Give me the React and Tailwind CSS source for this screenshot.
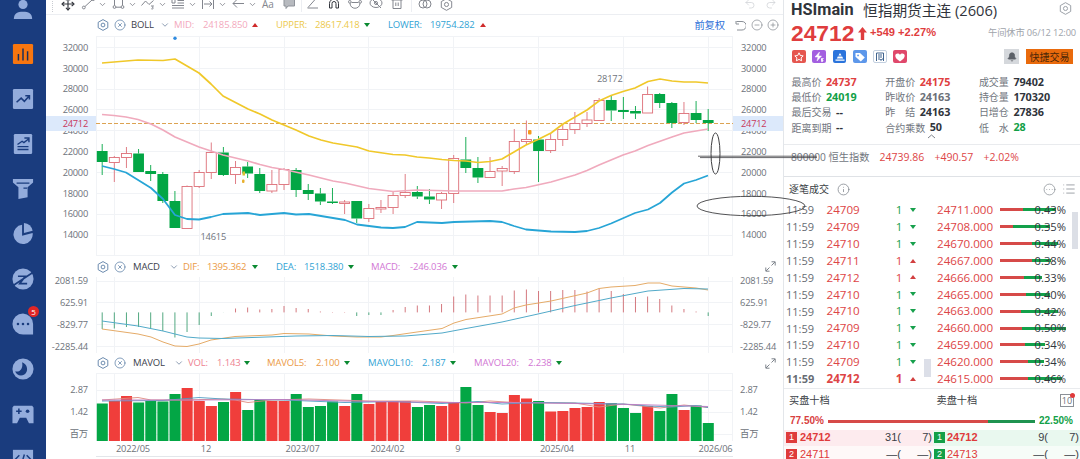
import {
  Move, ChevronDown, CirclePlus, CircleMinus, CircleX, Info, CircleEllipsis, List, Bell, Undo2, Redo2,
} from 'lucide-react';

const STEP = 12.12;
const X0 = 102.2;
const xAt = (i) => X0 + i * STEP;
const GREEN = '#03a645';
const RED = '#f03e3b';

// [up, bodyTop, bodyBottom, high, low]
const candles = [
  [0, 151, 162, 144, 175], [1, 157.5, 162.5, 156, 182], [1, 153.5, 157.5, 147, 168], [0, 153.5, 172, 149, 172],
  [0, 171, 174, 165, 181], [0, 174, 201, 172, 203], [0, 201, 228, 191, 228], [1, 186.5, 228.5, 185.5, 228.5],
  [1, 172.5, 186.5, 170, 188], [1, 152.5, 172.5, 142.5, 179], [0, 152.5, 175, 147, 176], [1, 167.5, 174.5, 161, 184],
  [0, 166.5, 173.5, 162, 178], [0, 174, 191, 168, 193], [1, 184.5, 191, 170, 193], [1, 169.5, 184.5, 168, 190],
  [0, 170, 190, 168, 197], [0, 190, 194, 184, 200], [0, 193.5, 201.5, 188, 205], [0, 201.5, 203, 188, 204],
  [1, 202, 203.5, 200, 214], [0, 201, 218.5, 201, 223], [1, 208.5, 218.5, 204, 222], [1, 207.5, 209, 200, 213],
  [1, 195.5, 207.5, 192, 214], [1, 192.5, 195.5, 174, 198], [0, 192, 196.5, 186, 199], [0, 196.5, 199.5, 189, 204],
  [1, 193.5, 200, 192, 209], [1, 158.5, 193.5, 155, 203], [0, 159.5, 168, 137, 173], [0, 168, 177.5, 157, 183],
  [1, 171.5, 177.5, 157, 178], [1, 168.5, 171, 166, 186], [1, 141.5, 171.5, 129, 174], [1, 139.5, 141.5, 120.5, 145],
  [0, 139.5, 151, 136, 182], [1, 139.5, 150.5, 133, 153], [1, 129.5, 139.5, 124, 146], [1, 123.5, 129.5, 112, 134],
  [1, 120, 123.5, 112, 127], [1, 100.5, 120.5, 98, 121], [0, 100, 110.5, 96, 121], [0, 110, 112, 97, 119],
  [0, 111, 113.5, 106, 119], [1, 94.5, 113, 86.5, 113], [0, 94, 103, 93, 108], [0, 103, 123, 102, 128],
  [1, 113.5, 122.5, 102, 125], [0, 113, 120, 101, 123], [0, 120, 123, 109, 131],
];

const upper = '102,63 114,62 126,61 138,60 163,60.5 175,59 187,66 199,73 211,84 223,96 248,109 260,114 272,120 284,125 296,130 309,136 321,140 333,143 357,147 369,151 393,154.5 405,155 417,157 429,158 442,159.5 454,160.5 466,161 478,162.5 490,161.5 502,159 514,152 526,145 538,139.5 551,133 563,124 575,117 587,110 599,101 611,95.5 623,91.5 635,88 648,81.5 660,79 672,81 684,82 696,82 708,83';
const mid = '102,114.5 114,115.5 126,117 138,119.5 151,124 163,130 175,137 187,142 199,147 211,151 223,155 248,161 260,164.5 272,167.5 284,169.5 309,175 333,181 345,183 369,188.5 393,191.5 417,190 454,191 502,191 514,189 526,187.5 551,182 575,175 587,170.5 599,165 611,160 623,155 635,151 648,145.5 672,137 684,133 708,129';
const lower = '102,166 114,169 126,172.5 151,188 163,199 175,215 187,219 199,219.5 211,217 223,214 248,213 260,215 284,213 296,214.5 309,214 321,216 345,220 357,224.5 369,226 381,227.5 393,228 405,227 417,222 442,223 454,222 490,221 502,222 514,226 526,229.5 551,231.5 575,232 587,231 599,228 611,223.5 635,213 648,209.5 660,203 672,192.5 684,183.5 696,180 708,175.5';

const macdEnds = [
  329, 328.5, 327, 327, 328, 331, 337.5, 332, 325, 316, 312.5, 308.5, 307.5, 309.5, 309, 306, 308, 309, 311.5, 312,
  312, 316, 315, 315, 310, 307, 305.5, 305.5, 304, 296.5, 294.5, 295.5, 295.5, 295.5, 290.5, 289.5, 291, 291, 290, 290,
  291.5, 288.5, 291, 294, 297, 296.5, 299, 305.5, 309, 311.5, 316,
];
const dif = '102,329 138,334 151,337 163,342 175,346 187,346.5 199,344 211,340 235,336.5 272,335 284,333.5 309,334 333,336 357,337 381,337 393,335.5 417,332 442,328.5 454,323 466,319.5 502,314 514,308 526,305 551,301 587,293 599,288.5 611,287 635,285.5 648,283 660,283 672,286 696,288 708,290';
const dea = '102,321 138,326 163,331 175,334 187,337 199,338 223,338.5 296,336 333,335.5 369,336.5 405,336 442,333 466,328.5 502,322 538,314 575,305.5 611,298 648,291 684,288.5 708,289';

// [up, top]
const volumes = [
  [0, 403.5], [1, 401], [1, 396], [0, 402.5], [0, 401], [0, 401.5], [0, 394], [1, 388], [1, 401], [1, 406], [0, 402],
  [1, 392], [0, 410], [0, 400], [1, 401], [1, 401], [0, 394], [0, 407], [0, 406], [0, 401.5], [1, 406], [0, 394],
  [1, 404], [1, 402], [1, 401], [1, 401], [0, 407], [0, 405], [1, 406], [1, 403], [0, 387], [0, 405], [1, 412],
  [1, 413], [1, 395], [1, 398.5], [0, 401], [1, 411.5], [1, 411], [1, 408], [1, 407], [1, 402], [0, 403], [0, 408],
  [0, 413], [1, 406], [0, 411], [0, 394], [1, 410], [0, 405.5], [0, 423],
];

const priceTicks = [32000, 30000, 28000, 26000, 24000, 22000, 20000, 18000, 16000, 14000];
const macdTicks = ['2081.59', '625.91', '-829.77', '-2285.44'];
const volTicks = ['2.87', '1.42', '百万'];
const dates = ['2022/05', '12', '2023/07', '2024/02', '9', '2025/04', '11', '2026/06'];

const ticks = [
  ['24709', 0], ['24709', 0], ['24710', 0], ['24711', 1], ['24712', 1], ['24710', 0], ['24710', 0], ['24709', 0],
  ['24710', 0], ['24709', 0], ['24712', 1],
];
// [price, red width, total width, percent]
const levels = [
  ['24711.000', 23, 56, '0.43%'], ['24708.000', 13, 50, '0.35%'], ['24670.000', 32, 58, '0.44%'],
  ['24667.000', 32, 51, '0.38%'], ['24666.000', 24, 42, '0.33%'], ['24665.000', 26, 50, '0.40%'],
  ['24663.000', 21, 58, '0.42%'], ['24660.000', 22, 66, '0.50%'], ['24659.000', 25, 45, '0.34%'],
  ['24620.000', 28, 44, '0.34%'], ['24615.000', 28, 62, '0.46%'],
];

function HexGear({ size = 12, color = '#5c7fa6' }) {
  return (
    <svg width={size} height={size} viewBox="0 0 12 12" fill="none" stroke={color} strokeWidth="0.9" className="shrink-0">
      <path d="M6 .6 10.800 3.300v5.400L6 11.400 1.200 8.700V3.300z" strokeLinejoin="round" />
      <circle cx="6" cy="6" r="1.9" />
    </svg>
  );
}

function Tri({ up, color, className = '' }) {
  return (
    <svg width="6" height="4" viewBox="0 0 6 4" className={`shrink-0 ${className}`}>
      <path d={up ? 'M3 0 6 4H0z' : 'M0 0H6L3 4z'} fill={color || (up ? '#d02a2a' : '#0a8a32')} />
    </svg>
  );
}

function Expand() {
  return (
    <svg width="11" height="11" viewBox="0 0 11 11" fill="none" stroke="#7e848c" className="mr-[7px] ml-auto">
      <path d="M6.500 4.500 10 1M6.500.8H10.200V4.500M4.500 6.500 1 10M.8 6.500V10.200H4.500" />
    </svg>
  );
}

const SIDE = [
  <g key="user"><circle cx="12" cy="7" r="5" /><path d="M2 23c0-6 4-8 10-8s10 2 10 8z" /></g>,
  <g key="bars">
    <rect x="1" y="1" width="22" height="22" rx="1.5" fill="#f8760f" />
    <path d="M7 12v7M12 6v13M17 9v10" stroke="#1b2f5c" strokeWidth="1.6" />
  </g>,
  <g key="trend">
    <rect x="1" y="1" width="22" height="22" rx="1.5" />
    <path d="M5 15.5l5-4.5 3.500 3.500L18.500 9M14.500 8.500h4.500v4" stroke="#1a3c7e" strokeWidth="1.7" fill="none" />
  </g>,
  <g key="note">
    <rect x="2" y="1" width="20" height="22" rx="1.500" />
    <path d="M6 12.500l5-3.500 2 1.500 5-4M13.500 5.500h5v4.500M6 14.800h12M6 18h12" stroke="#1a3c7e" strokeWidth="1.5" fill="none" />
  </g>,
  <g key="funnel">
    <path d="M1 1h22v4l-6 5v11l-10 2V10L1 5z" />
    <path d="M5 5.500h14M12.500 11h4" stroke="#1a3c7e" strokeWidth="1.400" />
  </g>,
  <g key="pie">
    <path d="M11 2a10.500 10.500 0 1 0 11.500 9L11 14z" />
    <path d="M13 0a11 11 0 0 1 9.500 8.500L13 11z" />
  </g>,
  <g key="planet">
    <circle cx="12" cy="12" r="11.500" />
    <path d="M0 20 24 4M6.500 9h8L8.500 17h8" stroke="#1a3c7e" strokeWidth="1.900" fill="none" />
  </g>,
  <g key="chat">
    <path d="M12 .5A11.500 11.500 0 1 0 12 23.500h11V12A11.500 11.500 0 0 0 12 .5z" />
    <g fill="#1a3c7e"><circle cx="6.500" cy="12" r="1.400" /><circle cx="12" cy="12" r="1.400" /><circle cx="17.500" cy="12" r="1.400" /></g>
  </g>,
  <g key="moon">
    <circle cx="12" cy="12" r="11.500" />
    <path d="M11 4.500c6 2 7.500 10 2.500 13.500-4 2.500-9 .5-10-3.500 5 1.500 9-3.500 7.500-10z" fill="#1a3c7e" />
  </g>,
  <g key="game">
    <path d="M2 3h20l1.500 2v17h-5l-3-6h-7l-3 6h-5V5z" />
    <path d="M7.500 6v6M4.500 9h6" stroke="#1a3c7e" strokeWidth="1.700" /><circle cx="17" cy="9" r="2" fill="#1a3c7e" />
  </g>,
  <g key="code">
    <rect x="1" y="2" width="22" height="20" />
    <path d="M8 8l-4 4 4 4M16 8l4 4-4 4M13.500 7l-3 10" stroke="#1a3c7e" strokeWidth="1.600" fill="none" />
  </g>,
];

function Sidebar() {
  return (
    <nav className="w-[46px] shrink-0 overflow-hidden bg-[#1a3c7e]">
      <div className="-mt-[14px] flex flex-col">
        {SIDE.map((icon, i) => (
          <div key={i} className="relative flex h-[45px] shrink-0 items-center justify-center">
            <svg width="22" height="22" viewBox="0 0 24 24" fill="#93acdc">{icon}</svg>
            {i === 7 && (
              <span className="absolute top-[5px] left-[28px] flex size-[11px] items-center justify-center rounded-full bg-[#e02626] text-[8px] text-white">5</span>
            )}
          </div>
        ))}
      </div>
    </nav>
  );
}

// toolbar glyphs, drawn in a 16x12 box
const drawTools = [
  <g key="line"><path d="M5 8.500 12 2" /><circle cx="3.800" cy="9.500" r="1.400" /><circle cx="13.200" cy="1.200" r="1.400" /></g>,
  <g key="rect"><path d="M4.500 0v7.500M6 9.200h5M12.500 0v7.500M4 1h9" /><circle cx="4.500" cy="9" r="1.400" /><circle cx="12.500" cy="9" r="1.400" /></g>,
  <g key="wave"><path d="M1.500 7.500 5.500 3 9 6.500 13.500 2.500M11 8h2.500l-1.200 1.200c1.800.3 1 2.300-1 1.600" /></g>,
  <g key="text"><path d="M2 10h12M2 7.500h12M7.500 5h6.500M7.500 2.500h6.500M2 1v4h3V1" /></g>,
  <g key="range"><path d="M2.500 0v11M13.500 0v11M4 6h8M9.500 3.500 12 6 9.500 8.500" /></g>,
  <g key="arrow"><path d="M3 5.500h11M7 1.500 3 5.500l4 4" /></g>,
];
const editTools = [
  <g key="angle"><path d="M2.500 10H13M3 9.500 10.500 1" /></g>,
  <g key="magnet" stroke="#33363d"><path d="M3.500 10V5.500a4.500 4.500 0 0 1 9 0V10H10V5.500a2 2 0 0 0-4 0V10z" /></g>,
  <g key="loop"><path d="M3 5c0 7 10 7 10 0M4.500 4.500h7" /><circle cx="2.800" cy="3.800" r="1.300" /><circle cx="13.200" cy="3.800" r="1.300" /></g>,
  <g key="hide"><ellipse cx="8" cy="5" rx="6" ry="4.500" /><path d="M3 0l10 10" /><circle cx="8" cy="5" r="1.500" /></g>,
  <g key="trash"><path d="M2.500 2h11M4 2v8.500h8V2M6.800 4.500v3.500M9.200 4.500v3.500" /></g>,
];

function ToolIcon({ children }) {
  return <svg width="16" height="12" viewBox="0 0 16 12" fill="none" stroke="currentColor">{children}</svg>;
}

function Toolbar() {
  return (
    <div className="flex h-[15px] overflow-hidden border-b border-[#eceef2] text-[#83868e]">
      <div className="-mt-[4px] ml-[6px] flex h-4 grow items-center">
        <span className="h-4 w-0 border-l border-dotted border-[#c9ccd2]" />
        <span className="ml-[7px] flex w-[16px] justify-center text-[#33363d]"><Move size={14} strokeWidth={2} /></span>
        <div className="ml-1 flex gap-0.5">
          {drawTools.map((icon, i) => (
            <span key={i} className="flex items-center">
              <ToolIcon>{icon}</ToolIcon>
              <span className="flex w-3 justify-center"><ChevronDown size={9} strokeWidth={2.2} /></span>
            </span>
          ))}
        </div>
        <span className="w-5 text-center text-[10px] leading-[8px]">Aa</span>
        <svg width="16" height="12" viewBox="0 0 16 12" fill="#b7babf" stroke="#8f939a" className="ml-[3px]"><path d="M3 0h10.500v8H7L5 10.500V8H3z" /></svg>
        <span className="ml-[4px] h-4 w-px bg-[#eceef2]" />
        {editTools.map((icon, i) => (
          <span key={i} className="flex w-[21px] justify-center"><ToolIcon>{icon}</ToolIcon></span>
        ))}
        <span className="ml-1 h-4 w-px bg-[#eceef2]" />
        <span className="ml-1 flex w-[18px] justify-center">
          <svg width="14" height="10" viewBox="0 0 14 10" fill="none" stroke="currentColor">
            <circle cx="5" cy="5" r="4" /><circle cx="9" cy="5" r="4" />
          </svg>
        </span>
        <span className="ml-0.5 flex w-[21px] justify-center"><HexGear size={13} color="#83868e" /></span>
        <span className="mr-[6px] ml-auto flex gap-[9px] text-[#cfd2d6]"><Undo2 size={12} strokeWidth={1.5} /><Redo2 size={12} strokeWidth={1.5} /></span>
      </div>
    </div>
  );
}

// items: [text, width class, colour class, up]; a null text stands for a trend marker
function IndicatorBar({ name, nameWidth, items, children, className }) {
  return (
    <div className={`flex items-center pl-[51px] text-[9.5px] tracking-[-0.15px] whitespace-nowrap ${className}`}>
      <span className="flex w-[17px]"><HexGear /></span>
      <span className={`flex ${name === 'BOLL' ? 'w-[17px]' : 'w-[19px]'}`}><CircleX size={12} strokeWidth={1.5} className="text-[#5c7fa6]" /></span>
      <span className={`${nameWidth} text-[#3d424c]`}>{name}</span>
      <span className="w-[14px]"><ChevronDown size={10} strokeWidth={2.2} className="text-[#8496ad]" /></span>
      {items.map(([text, width, color, up], i) => (
        <span key={i} className={`${width} ${color}`}>
          {text !== null ? text : <Tri up={up} />}
        </span>
      ))}
      {children}
    </div>
  );
}

function PriceAxis({ right }) {
  const pad = right ? 'pl-2' : 'justify-end pr-2';
  return (
    <div className="relative w-[50px] shrink-0 pt-[1px] text-[9.3px] tracking-[-0.25px] text-[#6d727a]">
      {priceTicks.map((p) => (
        <div key={p} className={`flex h-[20.83px] items-center ${pad}`}>{p}</div>
      ))}
      <div className={`absolute top-[80px] left-0 flex h-[15px] w-full items-center bg-[#dce9fb] text-[#c8385c] ${pad}`}>24712</div>
    </div>
  );
}

function Axis({ labels, right, className }) {
  return (
    <div className={`w-[50px] shrink-0 text-[9.3px] tracking-[-0.15px] whitespace-nowrap text-[#6d727a] ${className}`}>
      {labels.map((t) => (
        <div key={t} className={`flex h-[21.9px] items-center ${right ? 'pl-[7px]' : 'justify-end pr-2'}`}>{t}</div>
      ))}
    </div>
  );
}

function Grid({ rows, top, bottom }) {
  return (
    <g stroke="#f1f3f6" shapeRendering="crispEdges">
      {[1, 8, 15, 22, 29, 36, 43, 50].map((i) => <line key={i} x1={xAt(i)} x2={xAt(i)} y1={top} y2={bottom} />)}
      {rows.map((y) => <line key={y} x1="96" x2="733" y1={y} y2={y} />)}
      <line x1="96.5" x2="96.5" y1={top} y2={bottom} />
      <line x1="732.5" x2="732.5" y1={top} y2={bottom} />
    </g>
  );
}

function PriceChart() {
  return (
    <svg width="637" height="220" viewBox="96 36 637 220" className="shrink-0">
      <Grid top={36} bottom={256} rows={[36.5, 47.5, 68.5, 89.5, 109.5, 130.5, 151.5, 172.5, 193.5, 214.5, 235.5, 255.5]} />
      <line x1="96" x2="733" y1="123.5" y2="123.5" stroke="#dca352" strokeDasharray="4 2" />
      {candles.map(([up, top, bottom, high, low], i) => {
        const x = xAt(i);
        const color = up ? '#dd6f78' : GREEN;
        return (
          <g key={i} stroke={color}>
            {high < top && <line x1={x} x2={x} y1={high} y2={top} strokeWidth="0.9" />}
            {low > bottom && <line x1={x} x2={x} y1={bottom} y2={low} strokeWidth="0.9" />}
            {up
              ? <rect x={x - 5} y={top} width="10" height={bottom - top} fill="#fff" strokeWidth="0.9" />
              : <rect x={x - 5.4} y={top} width="10.8" height={bottom - top} fill={GREEN} stroke="none" />}
          </g>
        );
      })}
      <g fill="none" strokeWidth="1.7" strokeLinejoin="round">
        <polyline points={mid} stroke="#f0aabd" />
        <polyline points={upper} stroke="#f0c82a" />
        <polyline points={lower} stroke="#27a5d6" strokeWidth="1.8" />
      </g>
      <circle cx="175" cy="38.3" r="1.7" fill="#2f8be0" />
      <rect x="528" y="130" width="3.5" height="4.5" rx="1" fill="#f59a1c" />
      <rect x="242.5" y="171.5" width="2.5" height="4" fill="#d8c330" />
      <rect x="242" y="179.5" width="2.5" height="3.5" rx="1" fill="#e8b02e" />
      <g fontSize="9.3" letterSpacing="-0.2" fill="#70757d">
        <text x="597" y="81.5">28172</text>
        <text x="200.5" y="239.5">14615</text>
      </g>
    </svg>
  );
}

function MacdChart() {
  return (
    <svg width="637" height="76" viewBox="96 277 637 76" className="shrink-0">
      <Grid top={277} bottom={353} rows={[281.5, 302.5, 324.5, 346.5]} />
      {macdEnds.map((y, i) => (
        <line key={i} x1={xAt(i)} x2={xAt(i)} y1="312.4" y2={y} stroke={y > 312.4 ? '#3f9f73' : '#cf6a70'} strokeWidth="0.9" />
      ))}
      <polyline points={dif} fill="none" stroke="#e5ab68" strokeWidth="1" />
      <polyline points={dea} fill="none" stroke="#52aac9" strokeWidth="1" />
    </svg>
  );
}

function VolumeChart() {
  return (
    <svg width="637" height="68" viewBox="96 373 637 68" className="shrink-0">
      <Grid top={373} bottom={441} rows={[373.5, 390.5, 412.5, 434.5]} />
      {volumes.map(([up, top], i) => (
        <rect key={i} x={xAt(i) - 5.4} y={top} width="11" height={441 - top} fill={up ? RED : GREEN} />
      ))}
      <g fill="none" strokeWidth="0.9">
        <polyline points="102,400 138,397.5 151,400 187,400 223,399 235,400 248,402.5 272,400 309,399 369,401 417,401 466,403 490,401 514,402.5 575,403 599,407 623,404 660,408 684,405 708,407.5" stroke="#e08a80" />
        <polyline points="102,401 163,400.5 199,397.5 223,399 284,400 345,402.5 393,401.5 442,403.5 478,401.5 502,404 538,402.5 575,403 623,404 648,406 672,407 696,405.5 708,407.5" stroke="#4f9cc4" />
        <polyline points="102,400 199,400 284,399.5 345,401 442,402.5 502,402.5 575,403.5 635,404.5 708,406.5" stroke="#bd7cc2" />
      </g>
    </svg>
  );
}

function ChartPanel() {
  return (
    <main className="flex w-[738px] shrink-0 flex-col border-r border-[#e3e6ea]">
      <Toolbar />
      <IndicatorBar
        name="BOLL"
        nameWidth="w-[29px]"
        className="h-[21px] pb-[1px]"
        items={[
          ['MID:', 'w-[29px]', 'text-[#f3a9bd]'], ['24185.850', 'w-[49px]', 'text-[#f3a9bd]'], [null, 'w-[24px]', '', true],
          ['UPPER:', 'w-[39px]', 'text-[#ecc94b]'], ['28617.418', 'w-[49px]', 'text-[#ecc94b]'], [null, 'w-[24px]', '', false],
          ['LOWER:', 'w-[42px]', 'text-[#32a3d4]'], ['19754.282', 'w-[50px]', 'text-[#32a3d4]'], [null, 'w-[14px]', '', true],
        ]}
      >
        <span className="mr-[10px] ml-auto text-[10.3px] tracking-[-0.1px] text-[#2f6fd8]">前复权</span>
        <span className="mr-[4px] flex items-center gap-[4.5px] text-[#8b9097]">
          <svg width="11" height="11" viewBox="0 0 11 11" fill="none" stroke="currentColor">
            <path d="M1 1v3h3M1.500 1.500H7a4 4 0 0 1 0 8.500H2" />
          </svg>
          <CircleMinus size={12} strokeWidth={1.5} /><CirclePlus size={12} strokeWidth={1.5} />
        </span>
      </IndicatorBar>
      <div className="flex h-[220px]">
        <PriceAxis /><PriceChart /><PriceAxis right />
      </div>
      <IndicatorBar
        name="MACD"
        nameWidth="w-[36px]"
        className="h-[21px]"
        items={[
          ['DIF:', 'w-[24px]', 'text-[#eb9a45]'], ['1395.362', 'w-[45px]', 'text-[#eb9a45]'], [null, 'w-[24px]', '', false],
          ['DEA:', 'w-[28px]', 'text-[#32a3d4]'], ['1518.380', 'w-[44px]', 'text-[#32a3d4]'], [null, 'w-[23px]', '', false],
          ['MACD:', 'w-[39px]', 'text-[#d277d4]'], ['-246.036', 'w-[42px]', 'text-[#d277d4]'], [null, 'w-[10px]', '', false],
        ]}
      >
        <Expand />
      </IndicatorBar>
      <div className="flex h-[76px]">
        <Axis labels={macdTicks} className="-mt-[7px]" /><MacdChart /><Axis labels={macdTicks} right className="-mt-[7px]" />
      </div>
      <IndicatorBar
        name="MAVOL"
        nameWidth="w-[41px]"
        className="h-[20px]"
        items={[
          ['VOL:', 'w-[29px]', 'text-[#ee8291]'], ['1.143', 'w-[27px]', 'text-[#ee8291]'], [null, 'w-[23px]', '', false],
          ['MAVOL5:', 'w-[49px]', 'text-[#eb9a45]'], ['2.100', 'w-[28px]', 'text-[#eb9a45]'], [null, 'w-[24px]', '', false],
          ['MAVOL10:', 'w-[54px]', 'text-[#32a3d4]'], ['2.187', 'w-[28px]', 'text-[#32a3d4]'], [null, 'w-[24px]', '', false],
          ['MAVOL20:', 'w-[54px]', 'text-[#d277d4]'], ['2.238', 'w-[28px]', 'text-[#d277d4]'], [null, 'w-[10px]', '', false],
        ]}
      >
        <Expand />
      </IndicatorBar>
      <div className="flex h-[68px]">
        <Axis labels={volTicks} className="pt-[6px]" /><VolumeChart /><Axis labels={volTicks} right className="pt-[6px]" />
      </div>
      <div className="ml-[50px] flex h-[16px] w-[637px] items-center border-b border-[#e3e6ea] pl-[20px] text-[9.3px] tracking-[-0.2px] text-[#6d727a]">
        {dates.map((d, i) => (
          <span key={d} className={`w-[84.8px] shrink-0 ${i === 7 ? '-ml-[11px]' : ''}`}>{d}</span>
        ))}
      </div>
    </main>
  );
}

// [glyph, background class], glyphs in a 14x14 box
const badges = [
  [<path key="a" d="M7 2.800 8.300 5.500l2.900.4-2.100 2 .5 2.900L7 9.400l-2.600 1.400.5-2.900-2.100-2 2.900-.4z" fill="none" stroke="#fff" />, 'bg-[#e5564f]'],
  [<path key="b" d="M7.500 2 3 7h3L5 11l4.500-5h-3zM9 8.500h2.500L10 10c2 0 1.500 2-.8 1.600" fill="#fff" stroke="#fff" strokeWidth=".5" />, 'bg-[#a35fe0]'],
  [<path key="c" d="M7 3 8.500 5.500h-3zM4.800 6.500h4.400l1 2H3.800zM2.500 9.500h9v1.300h-9z" fill="#fff" />, 'bg-[#2b74dc]'],
  [<path key="d" d="M2.500 3h4.500l4.800 4.600-4 3.900L2.500 6.800zM5 4.500a.9.9 0 1 0 .1 0z" fill="#fff" fillRule="evenodd" />, 'bg-[#5d97ea]'],
  [<path key="e" d="M3.500 11V3h7v8M5 5h4M5 7h4M5 9h2l1 1.500L9 9h1.500" fill="none" stroke="#41648f" />, 'border border-[#c3d0e0]'],
  [<path key="f" d="M7 11.500C3.500 9 2.300 7.500 2.300 5.700 2.300 3.200 5.600 2.500 7 4.700c1.400-2.200 4.700-1.500 4.700 1C11.700 7.500 10.500 9 7 11.500z" fill="#fff" />, 'bg-[#e0486b]'],
];

// [label, value, value class]
const stats = [
  [['最高价', '24737', 'text-[#e0403f]'], ['开盘价', '24175', 'text-[#e0403f]'], ['成交量', '79402', '']],
  [['最低价', '24019', 'text-[#12a047]'], ['昨收价', '24163', 'text-[#6b7078]'], ['持仓量', '170320', '']],
  [['最后交易', '--', ''], ['昨\u3000结', '24163', ''], ['日增仓', '27836', '']],
  [['距离到期', '--', ''], ['合约乘数', '50', ''], ['低\u3000水', '28', 'text-[#12a047]']],
];

function Quote() {
  return (
    <section className="h-[145px] border-b border-[#e9ebee] pl-[7px]">
      <div className="flex h-[21px] items-center text-[#30343b]">
        <span className="w-[72px] font-['Roboto','Noto_Sans',sans-serif] text-[16.3px] font-bold">HSImain</span>
        <span className="text-[14.7px] whitespace-nowrap">恒指期货主连 (2606)</span>
        <span className="mr-[8px] ml-auto -mt-1"><HexGear size={13} color="#9a9fa7" /></span>
      </div>
      <div className="flex h-[24px] items-center font-['Liberation_Sans',sans-serif] text-[#df3d3e]">
        <span className="w-[67px] text-[22.8px] font-bold">24712</span>
        <svg width="9" height="13" viewBox="0 0 9 13" fill="currentColor" className="mr-[3px]"><path d="M4.5 0 9 5.500H6.200V13H2.800V5.500H0z" /></svg>
        <span className="text-[11.1px] font-bold whitespace-nowrap">+549 +2.27%</span>
        <span className="mr-[4px] ml-auto font-['Open_Sans','Noto_Sans_CJK_SC',sans-serif] text-[9.3px] tracking-[-0.15px] text-[#a0a4ab]">午间休市 06/12 12:00</span>
      </div>
      <div className="flex h-[23px] items-center pl-[1px]">
        <div className="flex gap-[6.5px]">
          {badges.map(([glyph, cls], i) => (
            <span key={i} className={`flex size-[13.8px] items-center justify-center rounded-[2px] ${cls}`}>
              <svg width="14" height="14" viewBox="0 0 14 14" className="shrink-0">{glyph}</svg>
            </span>
          ))}
        </div>
        <span className="mr-[7px] ml-auto flex size-[15px] items-center justify-center bg-[#d5d8dc]">
          <Bell size={10} fill="#5b6068" className="text-[#5b6068]" />
        </span>
        <span className="mr-[7px] flex h-[15px] w-[47px] items-center justify-center bg-[#e96a0c] text-[10px] whitespace-nowrap text-[#4a2708]">快捷交易</span>
      </div>
      <div className="mt-[6.5px]">
        {stats.map((row, i) => (
          <div key={i} className="flex h-[15.2px] items-center pl-[0.5px] text-[10px] whitespace-nowrap text-[#71767e]">
            {row.map(([label, value, cls]) => (
              <span key={label} className="flex w-[93.7px] items-center gap-[4.5px]">
                {label}
                <b className={`text-[10.8px] tracking-[-0.05px] ${cls || 'text-[#30343b]'}`}>{value}</b>
              </span>
            ))}
          </div>
        ))}
        <svg width="9" height="5" viewBox="0 0 9 5" fill="none" stroke="#7e838b" className="-mt-px ml-[136px]"><path d="M1 4 4.500 1 8 4" /></svg>
      </div>
    </section>
  );
}

function Ticks() {
  return (
    <div className="w-[147px] shrink-0">
      {ticks.map(([price, up], i) => {
        const last = i === ticks.length - 1;
        return (
          <div key={i} className={`flex h-[16.88px] items-center ${last ? 'font-bold' : ''}`}>
            <span className="ml-[2px] w-[40.5px] text-[11px] text-[#676c74]">11:59</span>
            <span className="w-[66px] text-[11.6px] text-[#dd4546]">{price}</span>
            <span className={`w-[10px] text-right text-[11.6px] ${up ? 'text-[#dd4546]' : 'text-[#17a04c]'}`}>1</span>
            <Tri up={up} color={up ? '#d23f40' : '#17a04c'} className="ml-[7px]" />
          </div>
        );
      })}
    </div>
  );
}

function Levels() {
  return (
    <div className="w-[135px] shrink-0 pl-[6px]">
      {levels.map(([price, red, total, pct]) => (
        <div key={price} className="relative flex h-[16.88px] items-center">
          <span className="w-[63px] text-[11.6px] text-[#dd4546]">{price}</span>
          <span className="h-[3px] bg-[#d64a48]" style={{ width: red }} />
          <span className="h-[3px] bg-[#13a04a]" style={{ width: total - red }} />
          <span className="absolute right-0 text-[11.2px] text-[#33373e]">{pct}</span>
        </div>
      ))}
    </div>
  );
}

function BookRow({ n, price, bold, a, b, sell }) {
  const tone = sell ? (bold ? 'bg-[#e9f8ef]' : 'bg-[#f6fcf8]') : (bold ? 'bg-[#fdebee]' : 'bg-[#fef8f8]');
  return (
    <div className={`flex h-[16.5px] items-center text-[11px] text-[#3b3f46] ${tone} ${sell ? 'w-[147px] pl-[1px]' : 'w-[149px] pl-[2px]'}`}>
      <span className={`flex size-[11px] items-center justify-center text-[9px] text-white ${sell ? 'bg-[#12a047]' : 'bg-[#df3b3b]'}`}>{n}</span>
      <span className={`w-[70px] text-[#df3b3b] ${sell ? 'ml-[2px]' : 'ml-[3px]'} ${bold ? 'font-bold' : ''}`}>{price}</span>
      <span className="w-[31px] text-right">{a}(</span>
      <span className="w-[31px] text-right">{b})</span>
    </div>
  );
}

function QuotePanel() {
  return (
    <aside className="w-[296px] shrink-0 overflow-hidden">
      <Quote />
      <div className="flex h-[32px] items-center border-b border-[#dfe2e6] pb-[7px] pl-[7px] text-[10.2px] whitespace-nowrap text-[#dd4546]">
        <span className="w-[88.5px] text-[#71767e]">800000 恒生指数</span>
        <span className="w-[55px] text-[10.5px]">24739.86</span>
        <span className="w-[49px] text-[10.5px]">+490.57</span>
        <span className="text-[10.5px]">+2.02%</span>
      </div>
      <div className="flex h-[24.5px] items-center pl-[5px] text-[10px] text-[#3b3f46]">
        <span className="w-[48px]">逐笔成交</span>
        <Info size={13} strokeWidth={1.4} className="text-[#7e838b]" />
        <span className="mr-[4px] ml-auto flex items-center gap-[6px] text-[#8b9097]">
          <CircleEllipsis size={13} strokeWidth={1.4} /><List size={14} strokeWidth={1.4} />
        </span>
      </div>
      <div className="flex h-[186px]">
        <div className="relative flex">
          <Ticks />
          <span className="absolute top-[157px] right-0 h-[18px] w-[7px] bg-[#dcdfe8]" />
        </div>
        <Levels />
        <span className="mt-[10px] ml-[6px] h-[37px] w-[6px] bg-[#dcdfe6]" />
      </div>
      <div className="flex h-[25px] items-center border-t border-[#e9ebee] pl-[5px] text-[10.2px] text-[#3b3f46]">
        <span className="w-[147.5px]">买盘十档</span>
        <span>卖盘十档</span>
        <span className="relative mr-[6px] ml-auto flex h-[13px] w-[14px] items-center justify-center border border-[#8b9097] text-[9px] text-[#6d727a]">
          10
          <span className="absolute -top-[2px] -right-[2px] size-[5px] rounded-full bg-[#e03a3a]" />
        </span>
      </div>
      <div className="flex h-[17px] items-center pl-[6px] font-['Liberation_Sans',sans-serif] text-[10px] font-bold">
        <span className="w-[38px] text-[#d8403f]">77.50%</span>
        <span className="h-[3px] w-[160px] bg-[#d64a48]" />
        <span className="h-[3px] w-[47px] bg-[#1f9350]" />
        <span className="ml-[4px] text-[#12a047]">22.50%</span>
      </div>
      <div className="font-['Liberation_Sans',sans-serif]">
        <div className="flex">
          <BookRow n="1" price="24712" bold a="31" b="7" /><BookRow sell n="1" price="24712" bold a="9" b="7" />
        </div>
        <div className="flex">
          <BookRow n="2" price="24711" a="—" b="—" /><BookRow sell n="2" price="24713" a="—" b="—" />
        </div>
      </div>
    </aside>
  );
}

export default function App() {
  return (
    <div className="relative flex h-[459px] w-[1080px] overflow-hidden bg-white font-['Open_Sans','Noto_Sans_CJK_SC',sans-serif] leading-none">
      <Sidebar />
      <ChartPanel />
      <QuotePanel />
      {/* hand-drawn marks that float over both panels */}
      <svg width="130" height="90" viewBox="692 128 130 90" fill="none" stroke="#3f3f42" className="pointer-events-none absolute top-[128px] left-[692px]">
        <ellipse cx="715.5" cy="153.5" rx="4.5" ry="20.5" />
        <ellipse cx="751" cy="206" rx="54" ry="9.7" strokeWidth="0.9" />
        <path d="M698 156.200H817M700 157.600H817" strokeWidth="0.8" />
      </svg>
    </div>
  );
}
